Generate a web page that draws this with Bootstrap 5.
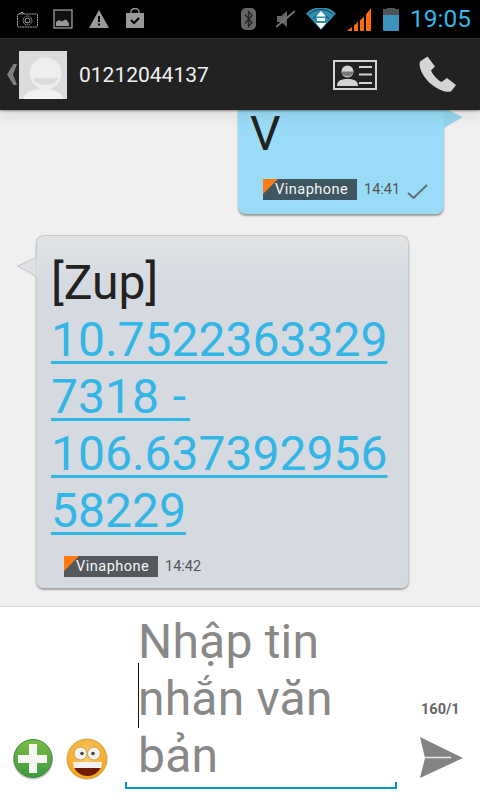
<!DOCTYPE html>
<html lang="en">
<head>
    <meta charset="UTF-8">
    <meta name="viewport" content="width=device-width, initial-scale=1.0">
    <title>Tin nhắn</title>
    <link href="https://cdn.jsdelivr.net/npm/bootstrap@5.3.0/dist/css/bootstrap.min.css" rel="stylesheet">
    <style>
        html, body { margin: 0; height: 100%; overflow: hidden; }
        body { width: 480px; height: 800px; background: #f0f0f0; font-family: Roboto, "Liberation Sans", sans-serif; }
        .screen { width: 480px; height: 800px; }

        .status-bar { height: 38px; background: #000; flex: none; padding-left: 17px; padding-right: 9px; }
        .status-clock { color: #33b5e5; font-size: 24.5px; line-height: 38px; margin-left: 11px; width: 61px; white-space: nowrap; }

        .action-bar { height: 72px; background: #222; flex: none; border-top: 1px solid #2e2e2e; box-shadow: 0 1px 2px rgba(0,0,0,.4), 0 4px 16px rgba(0,0,0,.1); z-index: 2; position: relative; }
        .back-caret { width: 19px; padding-left: 7px; }
        .avatar-box { width: 48px; height: 48px; background: #dcdcde; overflow: hidden; flex: none; }
        .contact-num { color: #f0f0f0; font-size: 21px; margin-left: 12px; padding-top: 2px; }

        .thread { height: 496px; background: #f0f0f0; flex: none; }
        .bubble { position: relative; border-radius: 0 0 8px 8px; }
        .bubble-out { width: 206px; height: 104px; margin-left: 238px; background: #9adcf7; box-shadow: 0 2px 2px rgba(0,0,0,.35); }
        .bubble-in { width: 373px; height: 353px; margin-top: 21px; margin-left: 36px; border-radius: 8px; background: linear-gradient(#e2e4e6, #d5dae1 50px); border: 1px solid #c6cacd; border-bottom: 0; box-shadow: 0 2px 2px rgba(0,0,0,.32); }
        .tail { position: absolute; }
        .tail-out { left: 205px; top: 0; }
        .tail-in { left: -20px; top: 19px; }
        .msg-body { font-size: 48px; line-height: 57px; color: #222; white-space: nowrap; }
        .bubble-out .msg-body { padding: 4px 0 0 12px; line-height: 40px; }
        .bubble-in .msg-body { padding: 18px 0 0 14px; }
        .msg-body a { color: #33b5e5; text-decoration-thickness: 3px; text-underline-offset: 5px; word-spacing: 2px; }
        .link-dash { letter-spacing: 4px; }
        .msg-meta { position: absolute; bottom: 14px; height: 21px; font-size: 14.5px; color: #555; white-space: nowrap; }
        .bubble-out .msg-meta { left: 25px; }
        .bubble-in .msg-meta { left: 27px; bottom: 11px; }
        .sim-tag { position: relative; display: block; width: 94px; height: 21px; line-height: 21px; padding-left: 12px; color: #f4f6f7; font-size: 14.5px; letter-spacing: .5px; margin-right: 7px; background: #54585c; }
        .bubble-out .sim-tag { background: #3f5660; }
        .sim-tag::before { content: ""; position: absolute; left: 0; top: 0; border-top: 15px solid #ff7a10; border-right: 15px solid transparent; }
        .tick-icon { margin-left: 7px; margin-top: 4px; }

        .composer { height: 194px; background: #fff; border-top: 1px solid #dcdcdc; flex: none; }
        .composer-tools { width: 125px; padding: 0 0 20px 12px; gap: 12px; flex: none; }
        .composer-field { width: 272px; height: 182px; position: relative; border-bottom: 2px solid #0099cc; font-size: 48px; line-height: 57px; color: #888; padding: 6px 0 0 13px; letter-spacing: .2px; flex: none; }
        .composer-field::before, .composer-field::after { content: ""; position: absolute; bottom: 0; width: 2px; height: 5px; background: #0099cc; }
        .composer-field::before { left: 0; }
        .composer-field::after { right: 0; }
        .caret-line { position: absolute; left: 13px; top: 56px; width: 1px; height: 65px; background: #111; }
        .composer-send { width: 83px; padding-top: 94px; }
        .char-count { font-size: 14.5px; font-weight: 700; color: #666; line-height: 18px; padding-left: 24px; }
        .send-icon { display: block; margin: 18px 0 0 23px; }
    </style>
</head>
<body>
    <div class="screen d-flex flex-column">
        <!-- status bar -->
        <div class="status-bar d-flex align-items-center">
            <svg width="21" height="17" viewBox="0 0 21 17" fill="none" stroke="#aaa"><rect x=".5" y="3" width="20" height="13" rx="1" stroke-dasharray="2 .6"/><path d="M3 3l1-1.500h2l1 1.500"/><circle cx="10.500" cy="9.500" r="4.500" stroke-dasharray="1.500 .6"/><circle cx="10.500" cy="9.500" r="2.500"/></svg>
            <svg style="margin-left:15px" width="20" height="20" viewBox="0 0 20 20"><rect x="1" y="1" width="18" height="18" fill="#111" stroke="#aaa" stroke-width="1.200"/><path d="M3 17v-4l3-2 3 1.500 3-2 2 1 2 3v2.500z" fill="#999"/></svg>
            <svg class="ms-3" width="20" height="18" viewBox="0 0 20 18"><path d="M10 0L20 18H0z" fill="#9a9a9a"/><rect x="9" y="6" width="2" height="6" fill="#000"/><rect x="9" y="13.500" width="2" height="2" fill="#000"/></svg>
            <svg class="ms-3" style="margin-top:-2px" width="20" height="20" viewBox="0 0 20 20"><path d="M6 5V3.500a4 3 0 0 1 8 0V5" fill="none" stroke="#9a9a9a" stroke-width="1.300"/><rect x="1" y="5" width="18" height="15" fill="#9a9a9a"/><path d="M6 12l3 3 5-5" fill="none" stroke="#000" stroke-width="2"/></svg>
            <div class="ms-auto d-flex align-items-center">
                <svg width="15" height="22" viewBox="0 0 15 22"><rect width="15" height="22" rx="5" fill="#666"/><path d="M4 6.500l7 8-3.500 4V3.500L11 7.500l-7 8" fill="none" stroke="#222" stroke-width="1.300"/></svg>
                <svg style="margin-left:20px" width="19" height="18" viewBox="0 0 19 18"><path d="M1 6h4l6-5v16l-6-5H1z" fill="#666"/><path d="M0 17L19 1" stroke="#777" stroke-width="1.800"/></svg>
                <svg style="margin-left:11px" width="30" height="22" viewBox="0 0 30 22"><path d="M15 22L0 5.500a21 21 0 0 1 30 0z" fill="#2f8fb3"/><path d="M3 6.500a17 17 0 0 1 24 0M7 10.500a11 11 0 0 1 16 0" fill="none" stroke="#000" stroke-width="1" opacity=".55"/><path d="M15 3l5 5.500H10zM15 21l-5-6h10z" fill="#fff"/><rect x="11" y="10" width="8" height="3" fill="#fff"/></svg>
                <svg style="margin-left:11px" width="24" height="23" viewBox="0 0 24 23"><path d="M0 23L5 19v4zM7 17.500l4-3.500v9H7zM13 12.500l4-4V23h-4zM19 6.500L24 0V23h-5z" fill="#ff6d0a"/></svg>
                <svg style="margin-left:12px" width="16" height="23" viewBox="0 0 16 23"><rect x="4" y="0" width="8" height="2" fill="#555"/><rect y="1" width="16" height="22" rx="1" fill="#3a94bb"/><path d="M0 2a1 1 0 0 1 1-1h14a1 1 0 0 1 1 1v5H0z" fill="#4d5256"/></svg>
                <div class="status-clock">19:05</div>
            </div>
        </div>

        <!-- action bar -->
        <div class="action-bar d-flex align-items-center">
            <div class="back-caret d-flex">
                <svg width="10" height="21" viewBox="0 0 10 21"><path d="M10 0L6 10.500 10 21H6.500L0 10.500 6.500 0z" fill="#7e7e7e"/></svg>
            </div>
            <div class="avatar-box">
                <svg width="48" height="48" viewBox="0 0 48 48"><circle cx="26.500" cy="22.500" r="16" fill="#eee"/><path d="M14 27h25c-1 4-6 7-12.500 7S15 31 14 27z" fill="#dcdcde"/><path d="M4 48c1-7 10-10 20-10s19 3 20 10z" fill="#f1f1f2"/></svg>
            </div>
            <div class="contact-num">01212044137</div>
            <svg class="ms-auto" style="margin-right:42px" width="44" height="30" viewBox="0 0 44 30"><rect x="1" y="1" width="42" height="28" fill="none" stroke="#d4d4d4" stroke-width="2"/><circle cx="14.500" cy="11.500" r="6" fill="#d4d4d4"/><path d="M8.500 11.500h12a6 5 0 0 1-12 0z" fill="#777"/><path d="M4 26c0-6 5-7 10.500-7s10.500 1 10.500 7z" fill="#d4d4d4"/><path d="M26 7h13M26 14.500h13M26 23h13" stroke="#d4d4d4" stroke-width="2"/></svg>
            <svg style="margin-right:24px" width="37" height="37" viewBox="0 0 37 37"><path d="M8.500.5L1 5.500C-1 12 5 22 12 28c6 5 14 9 20 7.500l5-6.500-9-7-5.500 4c-4-2-9-7.500-10.500-11.500l4-4z" fill="#d4d4d4"/></svg>
        </div>

        <!-- messages -->
        <div class="thread">
            <div class="bubble bubble-out">
                <svg class="tail tail-out" width="20" height="19" viewBox="0 0 20 19"><path d="M1 0H5L20 7 1 18z" fill="#95d5ef"/></svg>
                <div class="msg-body">V</div>
                <div class="msg-meta d-flex align-items-center"><span class="sim-tag">Vinaphone</span>14:41<svg class="tick-icon" width="21" height="15" viewBox="0 0 21 15"><path d="M1 9l5.500 5L20 1" fill="none" stroke="#5f6f78" stroke-width="2"/></svg></div>
            </div>
            <div class="bubble bubble-in">
                <svg class="tail tail-in" width="21" height="24" viewBox="0 0 21 24"><path d="M20 2L.5 11 20 22z" fill="#dfe1e4" stroke="#c4c7ca"/><rect x="20" y="2" width="2" height="20" fill="#dfe1e4"/></svg>
                <div class="msg-body">[Zup]<br><a href="#">10.7522363329<br>7318 <span class="link-dash">-</span><br>106.637392956<br>58229</a></div>
                <div class="msg-meta d-flex align-items-center"><span class="sim-tag">Vinaphone</span>14:42</div>
            </div>
        </div>

        <!-- composer -->
        <div class="composer d-flex">
            <div class="composer-tools d-flex align-items-end">
                <svg width="42" height="42" viewBox="0 0 42 42"><defs><linearGradient id="plusFill" x1="0" y1="0" x2="0" y2="1"><stop offset="0" stop-color="#7cbc44"/><stop offset="1" stop-color="#3e9a40"/></linearGradient></defs><circle cx="21" cy="21.500" r="20" fill="#ccc"/><circle cx="21" cy="20.500" r="19" fill="url(#plusFill)" stroke="#3c8a3c"/><path d="M17 6h8v11h10v8H25v10h-8V25H6v-8h11z" fill="#f4f8f0"/></svg>
                <svg width="42" height="42" viewBox="0 0 42 42"><defs><radialGradient id="faceFill" cx=".5" cy=".4" r=".6"><stop offset="0" stop-color="#fbd27a"/><stop offset="1" stop-color="#f5a312"/></radialGradient></defs><circle cx="21" cy="21" r="20" fill="url(#faceFill)" stroke="#c9a566"/><circle cx="14.500" cy="15.500" r="6.500" fill="#f3f3ef" stroke="#c98d2a" stroke-width=".8"/><circle cx="28" cy="15.500" r="6.500" fill="#f3f3ef" stroke="#c98d2a" stroke-width=".8"/><circle cx="16" cy="15.500" r="1.800" fill="#444"/><circle cx="27" cy="15.500" r="1.800" fill="#444"/><path d="M7 24h29c0 8-7 14-14.500 14S7 32 7 24z" fill="#6e1c04"/><path d="M7 24h29c0 2-.2 3-.8 6H7.800C7.200 27 7 26 7 24z" fill="#f2f2f2"/></svg>
            </div>
            <div class="composer-field">
                <span class="caret-line"></span>
                Nhập tin<br>nhắn văn<br>bản
            </div>
            <div class="composer-send">
                <div class="char-count">160/1</div>
                <svg class="send-icon" width="44" height="42" viewBox="0 0 44 42"><path d="M0 0L43 21 0 41 5 21z" fill="#838383"/><path d="M5 20.500h26" stroke="#e4e4e4" stroke-width="1.600"/></svg>
            </div>
        </div>
    </div>

    <script src="https://cdn.jsdelivr.net/npm/bootstrap@5.3.0/dist/js/bootstrap.bundle.min.js"></script>
</body>
</html>
